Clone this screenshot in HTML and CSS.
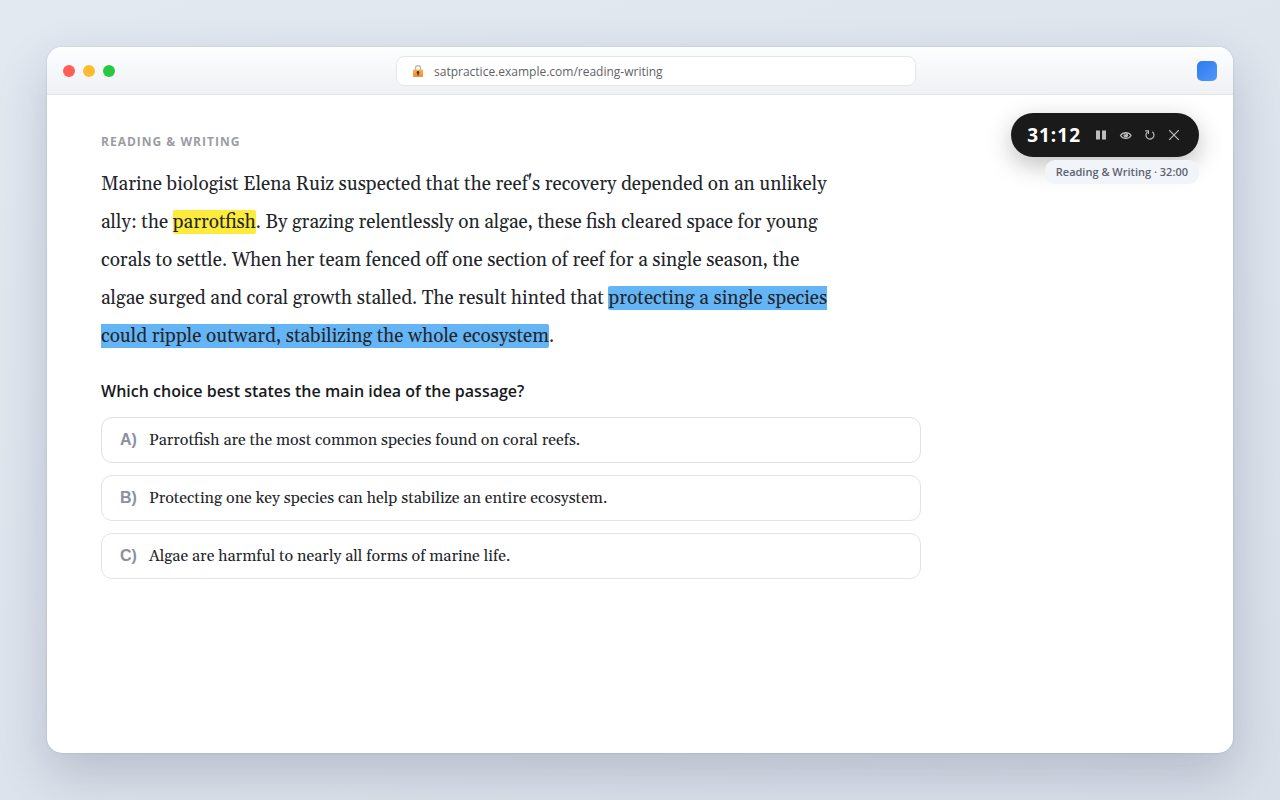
FILE: index.html
```html
<!DOCTYPE html>
<html lang="en">
<head>
    <meta charset="UTF-8">
    <meta name="viewport" content="width=device-width, initial-scale=1.0">
    <title>Reading &amp; Writing</title>
    <link rel="stylesheet" href="styles.css">
</head>
<body>
    <div class="browser">
        <header class="toolbar">
            <div class="dots">
                <span class="dot red"></span>
                <span class="dot yellow"></span>
                <span class="dot green"></span>
            </div>
            <label class="address">
                <svg class="lock" width="12" height="14" viewBox="0 0 12 14" aria-hidden="true">
                    <defs>
                        <linearGradient id="lock-body" x1="0" y1="0" x2="0" y2="1">
                            <stop offset="0" stop-color="#fcb53c"/>
                            <stop offset="1" stop-color="#f5834f"/>
                        </linearGradient>
                    </defs>
                    <path d="M3.5 7V4.2a2.500 2.500 0 0 1 5 0V7" fill="none" stroke="#b4b4b8" stroke-width="1.2"/>
                    <rect x="1" y="5.5" width="10" height="7.5" rx="1" fill="url(#lock-body)"/>
                    <circle cx="6" cy="8.4" r="1.3" fill="#4b3218"/>
                    <path d="M5.4 8.5h1.2v3H5.4z" fill="#4b3218"/>
                </svg>
                <input class="url" type="text" value="satpractice.example.com/reading-writing" aria-label="Address">
            </label>
            <button class="extension" type="button" aria-label="Extension"></button>
        </header>

        <main class="page">
            <section class="timer">
                <div class="timer-bar">
                    <span class="time">31:12</span>
                    <button type="button" aria-label="Pause">
                        <svg width="14" height="14" viewBox="0 0 14 14"><path d="M1 2.500h4v9H1zM7 2.500h4v9H7z" fill="currentColor"/></svg>
                    </button>
                    <button type="button" aria-label="Hide">
                        <svg width="14" height="14" viewBox="0 0 14 14" fill="none" stroke="currentColor">
                            <path d="M1.500 7.500C2.800 5.400 4.600 4.600 6.800 4.600S10.800 5.400 12.100 7.500C10.800 9.600 9 10.400 6.800 10.400S2.800 9.600 1.500 7.500z" stroke-width="1.200"/>
                            <circle cx="6.800" cy="7.300" r="2.300" fill="currentColor" stroke="none"/>
                            <path d="M5.500 7.200a1.400 1.400 0 0 1 1.400-1.300" stroke="#1a1a1a" stroke-width=".7"/>
                        </svg>
                    </button>
                    <button type="button" aria-label="Reset">
                        <svg width="14" height="14" viewBox="0 0 14 14" fill="none" stroke="currentColor" stroke-width="1.200">
                            <path d="M9.300 3.800a4 4 0 1 1-4.800.1"/>
                            <path d="M2.200 2.900h3.200v3.200"/>
                        </svg>
                    </button>
                    <button type="button" aria-label="Close">
                        <svg width="14" height="14" viewBox="0 0 14 14" fill="none" stroke="currentColor" stroke-width="1.200">
                            <path d="M2.200 2.200l9.600 9.600M11.800 2.200l-9.600 9.600"/>
                        </svg>
                    </button>
                </div>
                <div class="timer-label">Reading &amp; Writing · 32:00</div>
            </section>

            <h1 class="section-name">Reading &amp; Writing</h1>
            <p class="passage">Marine biologist Elena Ruiz suspected that the reef's recovery depended on an unlikely ally: the <mark class="hl-yellow">parrotfish</mark>. By grazing relentlessly on algae, these fish cleared space for young corals to settle. When her team fenced off one section of reef for a single season, the algae surged and coral growth stalled. The result hinted that <mark class="hl-blue">protecting a single species could ripple outward, stabilizing the whole ecosystem</mark>.</p>

            <h2 class="question">Which choice best states the main idea of the passage?</h2>
            <div class="choices">
                <button class="choice" type="button"><span class="letter">A)</span>Parrotfish are the most common species found on coral reefs.</button>
                <button class="choice" type="button"><span class="letter">B)</span>Protecting one key species can help stabilize an entire ecosystem.</button>
                <button class="choice" type="button"><span class="letter">C)</span>Algae are harmful to nearly all forms of marine life.</button>
            </div>
        </main>
    </div>
</body>
</html>
```

FILE: styles.css
```css
* {
    box-sizing: border-box;
}

body {
    margin: 0;
    padding: 47px;
    min-height: 100vh;
    display: flex;
    font-family: "Segoe UI", "Open Sans", "Noto Sans", sans-serif;
    background: linear-gradient(160deg, #e3e9f1, #d8dfe8);
}

button {
    padding: 0;
    border: none;
    background: none;
    font: inherit;
    cursor: pointer;
}

.browser {
    flex: 1;
    display: flex;
    flex-direction: column;
    background: #fff;
    border-radius: 15px;
    overflow: hidden;
    box-shadow: 0 20px 50px rgba(30, 41, 80, 0.2), 0 0 2px rgba(30, 41, 80, 0.2);
}

/* Browser toolbar */
.toolbar {
    display: flex;
    align-items: center;
    justify-content: space-between;
    height: 48px;
    padding: 0 16px;
    background: linear-gradient(#fdfefe, #eff1f4);
    border-bottom: 1px solid #e2e5e9;
}

.dots {
    display: flex;
    gap: 8px;
}

.dot {
    width: 12px;
    height: 12px;
    border-radius: 50%;
}

.red {
    background: #ff5f57;
}

.yellow {
    background: #febc2e;
}

.green {
    background: #28c840;
}

.address {
    display: flex;
    align-items: center;
    gap: 10px;
    width: 520px;
    height: 30px;
    padding: 0 15px;
    background: #fff;
    border: 1px solid #e4e6ea;
    border-radius: 8px;
}

.url {
    flex: 1;
    padding: 2px 0 0;
    border: none;
    outline: none;
    background: none;
    font-family: inherit;
    font-size: 12px;
    color: #5f6368;
}

.extension {
    width: 20px;
    height: 20px;
    border-radius: 5px;
    background: linear-gradient(135deg, #2b7bf0, #5597f9);
}

/* Page */
.page {
    position: relative;
    flex: 1;
    padding: 37px 54px;
}

.section-name {
    margin: 0 0 13px;
    font-size: 12px;
    line-height: 20px;
    font-weight: 700;
    letter-spacing: 1px;
    text-transform: uppercase;
    color: #9a9da3;
}

.passage {
    max-width: 740px;
    margin: 0 0 24px;
    font-family: Georgia, Gelasio, "Liberation Serif", serif;
    font-size: 19px;
    line-height: 38px;
    color: #22252a;
}

mark {
    color: inherit;
    border-radius: 2px;
}

.hl-yellow {
    background: #ffeb3b;
}

.hl-blue {
    background: #64b5f6;
}

.question {
    margin: 0 0 14px;
    font-size: 16px;
    line-height: 24px;
    font-weight: 600;
    color: #17191d;
}

.choices {
    display: flex;
    flex-direction: column;
    gap: 12px;
    max-width: 820px;
}

.choice {
    display: flex;
    align-items: center;
    gap: 12px;
    min-height: 46px;
    padding: 10px 18px;
    border: 1px solid #e1e3e6;
    border-radius: 11px;
    background: #fff;
    font-family: Georgia, Gelasio, "Liberation Serif", serif;
    font-size: 16px;
    text-align: left;
    color: #22252a;
}

.letter {
    font-family: "Liberation Sans", Arial, sans-serif;
    font-weight: 700;
    color: #8a90a0;
}

/* Floating timer */
.timer {
    position: absolute;
    top: 18px;
    right: 34px;
    display: flex;
    flex-direction: column;
    align-items: flex-end;
    gap: 3px;
}

.timer-bar {
    display: flex;
    align-items: center;
    gap: 10px;
    height: 44px;
    padding: 0 18px 0 16px;
    border-radius: 22px;
    background: #1a1a1a;
    color: #bdbdbd;
    box-shadow: 0 8px 24px rgba(0, 0, 0, 0.25);
}

.timer-bar button {
    display: flex;
    color: inherit;
}

.time {
    margin-right: 4px;
    font-size: 19px;
    font-weight: 700;
    letter-spacing: 1px;
    color: #fff;
}

.timer-label {
    padding: 0 11px;
    border-radius: 10px;
    background: #f1f4f9;
    font-size: 11px;
    line-height: 24px;
    font-weight: 600;
    color: #5c6370;
}
```
